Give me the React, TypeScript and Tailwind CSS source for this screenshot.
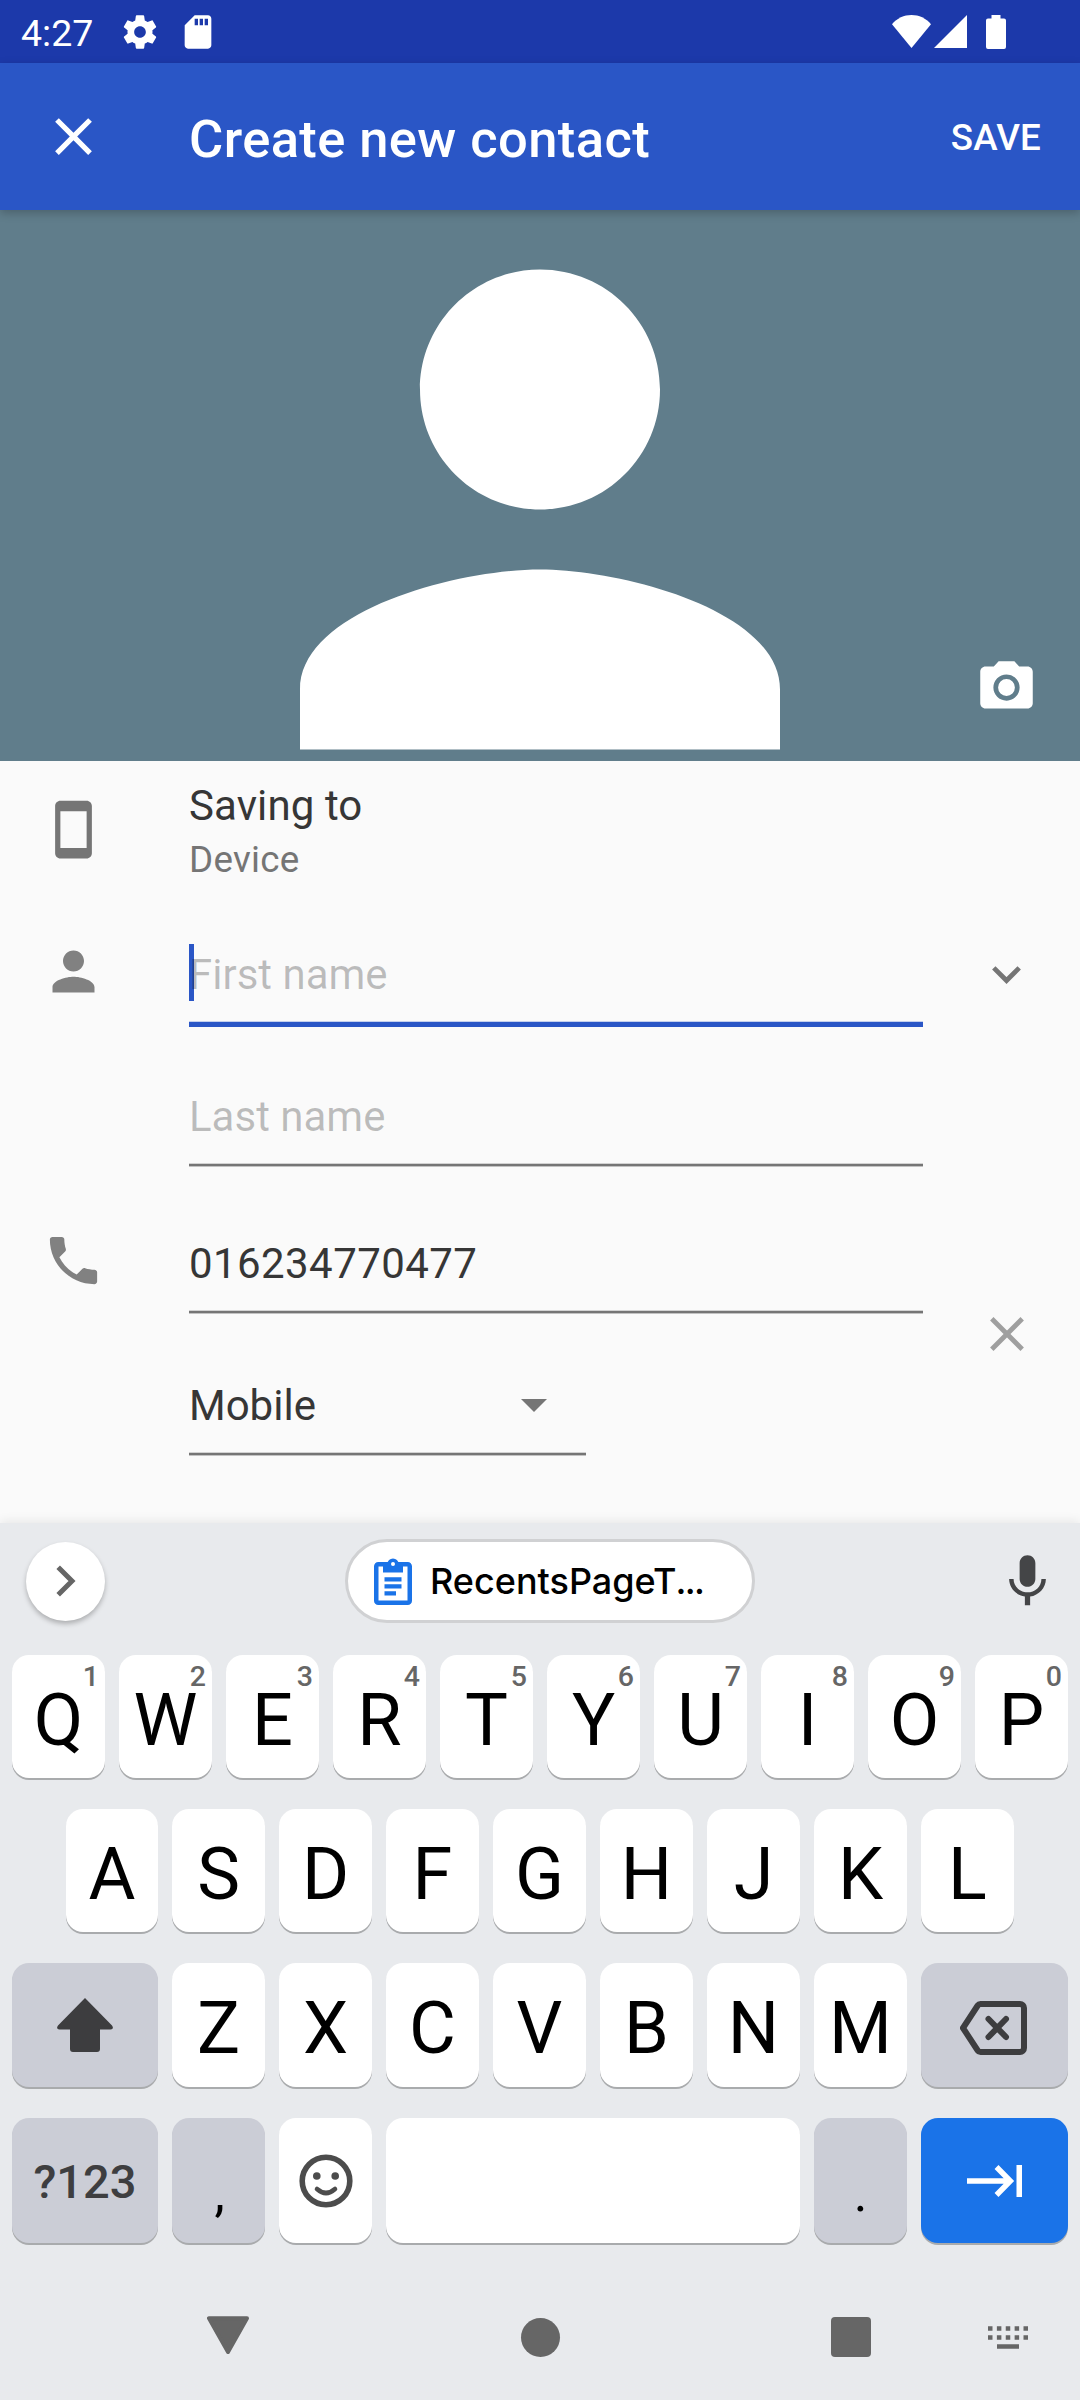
import type { ReactNode } from 'react';

function Icon({ d, className }: { d: string; className: string }) {
  return (
    <svg viewBox="0 0 24 24" className={className} fill="currentColor" aria-hidden="true">
      <path d={d} />
    </svg>
  );
}

const paths = {
  settings:
    'M19.43 12.98c.04-.32.07-.64.07-.98s-.03-.66-.07-.98l2.11-1.65c.19-.15.24-.42.12-.64l-2-3.46c-.12-.22-.39-.3-.61-.22l-2.49 1c-.52-.4-1.08-.73-1.69-.98l-.38-2.65C14.46 2.18 14.25 2 14 2h-4c-.25 0-.46.18-.49.42l-.38 2.65c-.61.25-1.17.59-1.69.98l-2.49-1c-.23-.09-.49 0-.61.22l-2 3.46c-.13.22-.07.49.12.64l2.11 1.65c-.04.32-.07.65-.07.98s.03.66.07.98l-2.11 1.65c-.19.15-.24.42-.12.64l2 3.46c.12.22.39.3.61.22l2.49-1c.52.4 1.08.73 1.69.98l.38 2.65c.03.24.24.42.49.42h4c.25 0 .46-.18.49-.42l.38-2.65c.61-.25 1.17-.59 1.69-.98l2.49 1c.23.09.49 0 .61-.22l2-3.46c.12-.22.07-.49-.12-.64l-2.11-1.65zM12 15.5c-1.93 0-3.5-1.57-3.5-3.5s1.57-3.5 3.5-3.5 3.5 1.57 3.5 3.5-1.57 3.5-3.5 3.5z',
  sdCard:
    'M18 2h-8L4.02 8 4 20c0 1.1.9 2 2 2h12c1.1 0 2-.9 2-2V4c0-1.1-.9-2-2-2zm-6 6h-2V4h2v4zm3 0h-2V4h2v4zm3 0h-2V4h2v4z',
  close:
    'M19 6.41L17.59 5 12 10.59 6.41 5 5 6.41 10.59 12 5 17.59 6.41 19 12 13.41 17.59 19 19 17.59 13.41 12z',
  camera:
    'M12 8.8a3.2 3.2 0 1 0 0 6.4 3.2 3.2 0 0 0 0-6.4zM9 2L7.17 4H4c-1.1 0-2 .9-2 2v12c0 1.1.9 2 2 2h16c1.1 0 2-.9 2-2V6c0-1.1-.9-2-2-2h-3.17L15 2H9zm3 15c-2.76 0-5-2.24-5-5s2.24-5 5-5 5 2.24 5 5-2.24 5-5 5z',
  smartphone:
    'M17 1.01L7 1c-1.1 0-2 .9-2 2v18c0 1.1.9 2 2 2h10c1.1 0 2-.9 2-2V3c0-1.1-.9-1.99-2-1.99zM17 19H7V5h10v14z',
  person:
    'M12 12c2.21 0 4-1.79 4-4s-1.79-4-4-4-4 1.79-4 4 1.79 4 4 4zm0 2c-2.67 0-8 1.34-8 4v2h16v-2c0-2.66-5.33-4-8-4z',
  phone:
    'M6.62 10.79c1.44 2.83 3.76 5.14 6.59 6.59l2.2-2.2c.27-.27.67-.36 1.02-.24 1.12.37 2.33.57 3.57.57.55 0 1 .45 1 1V20c0 .55-.45 1-1 1-9.39 0-17-7.61-17-17 0-.55.45-1 1-1h3.5c.55 0 1 .45 1 1 0 1.25.2 2.45.57 3.57.11.35.03.74-.25 1.02l-2.2 2.2z',
  mic: 'M12 14c1.66 0 2.99-1.34 2.99-3L15 5c0-1.66-1.34-3-3-3S9 3.34 9 5v6c0 1.66 1.34 3 3 3zm5.3-3c0 3-2.54 5.1-5.3 5.1S6.7 14 6.7 11H5c0 3.41 2.72 6.23 6 6.72V21h2v-3.28c3.28-.48 6-3.3 6-6.72h-1.7z',
};

function StatusBar() {
  return (
    <div className="flex h-[63px] items-center bg-[#1c39aa] pl-[21px] text-white">
      <span className="w-[99px] pt-[3px] text-[37.5px] leading-[44px]">4:27</span>
      <Icon d={paths.settings} className="size-[40px]" />
      <Icon d={paths.sdCard} className="ml-[18px] size-[40px]" />
      <svg viewBox="0 0 39 33" className="ml-[674px] h-[33px] w-[39px]" fill="currentColor">
        <path d="M0 9.2C5 3.2 12 0 19.5 0S34 3.2 39 9.2L19.5 33z" />
      </svg>
      <svg viewBox="0 0 33 33" className="ml-[3px] h-[33px] w-[33px]" fill="currentColor">
        <path d="M33 0V33H0z" />
      </svg>
      <svg viewBox="0 0 20 34" className="ml-[19px] h-[34px] w-[20px]" fill="currentColor">
        <path d="M5.5 0h9v3.400h3.500a2 2 0 0 1 2 2V32a2 2 0 0 1-2 2H2a2 2 0 0 1-2-2V5.400a2 2 0 0 1 2-2h3.500z" />
      </svg>
    </div>
  );
}

function AppBar() {
  return (
    <header className="relative z-10 flex h-[147px] items-center bg-[#2a56c6] pr-[39px] pl-[42px] text-white shadow-[0_3px_9px_rgba(0,0,0,0.22)]">
      <Icon d={paths.close} className="size-[63px]" />
      <h1 className="ml-[84px] flex-1 pt-[5px] text-[52.5px] leading-[62px] font-medium tracking-[0.4px]">Create new contact</h1>
      <button className="pt-[2px] text-[36.75px] leading-[44px] font-medium tracking-[0.15px]">SAVE</button>
    </header>
  );
}

function Photo() {
  return (
    <div className="relative h-[551px] bg-[#607d8b]">
      <svg viewBox="0 0 1080 551" className="h-[551px] w-[1080px]" fill="white">
        <path transform="translate(180 -60.5) scale(30)" d={paths.person} />
      </svg>
      <Icon d={paths.camera} className="absolute right-[42px] bottom-[42px] size-[63px] text-white" />
    </div>
  );
}

function Field({ children, className = '', focused = false }: { children: ReactNode; className?: string; focused?: boolean }) {
  return (
    <div className={className}>
      <div className="relative mb-[18px] flex h-[57px] items-center text-[42px] leading-[57px]">
        {focused && <span className="absolute top-[-2px] left-0 h-[57px] w-[5px] bg-[#2a56c6]" />}
        {children}
      </div>
      {focused ? (
        <div className="h-[6px] border-t border-[#c4d0ee] bg-[#2a56c6]" />
      ) : (
        <div className="h-[4px] border-t border-b border-t-[#d2d2d2] border-b-[#c2c2c2] bg-[#757575]" />
      )}
    </div>
  );
}

function Form() {
  return (
    <main className="h-[762px] bg-[#fafafa] text-[#363636]">
      <div className="flex h-[137px] items-center">
        <div className="w-[189px] pl-[42px]">
          <Icon d={paths.smartphone} className="size-[63px] text-[#757575]" />
        </div>
        <div className="pt-[3px]">
          <div className="text-[42px] leading-[50px] tracking-[0.1px]">Saving to</div>
          <div className="mt-[7px] text-[36.75px] leading-[44px] tracking-[0.3px] text-[#757575]">Device</div>
        </div>
      </div>
      <div className="flex">
        <div className="w-[189px] pt-[42px] pl-[42px]">
          <Icon d={paths.person} className="size-[63px] text-[#818181]" />
        </div>
        <div className="w-[734px]">
          <Field className="pt-[48px]" focused>
            <span className="relative text-[#000000]/25">First name</span>
          </Field>
          <Field className="pt-[61px]">
            <span className="text-[#000000]/25">Last name</span>
          </Field>
        </div>
        <div className="pt-[68px] pl-[69px]">
          <svg viewBox="0 0 29 18" className="h-[18px] w-[29px]" fill="none" stroke="#757575" strokeWidth="4.800">
            <path d="M1.800 1.900L14.500 14.500L27.200 1.900" />
          </svg>
        </div>
      </div>
      <div className="flex">
        <div className="w-[189px] pt-[62px] pl-[42px]">
          <Icon d={paths.phone} className="size-[63px] text-[#818181]" />
        </div>
        <div className="w-[734px]">
          <Field className="pt-[68px]">
            <span className="tracking-[0.42px]">016234770477</span>
          </Field>
          <Field className="w-[397px] pt-[63px]">
            <span className="flex-1">Mobile</span>
            <svg viewBox="0 0 26 13" className="mr-[39px] h-[13px] w-[26px]" fill="#757575">
              <path d="M0 0h26L13 13z" />
            </svg>
          </Field>
        </div>
        <div className="pt-[150px] pl-[67px]">
          <svg viewBox="0 0 34 34" className="h-[34px] w-[34px]" fill="none" stroke="#9f9f9f" strokeWidth="4.800">
            <path d="M1.800 1.800L32.200 32.200M32.200 1.800L1.800 32.200" />
          </svg>
        </div>
      </div>
    </main>
  );
}

function SuggestionBar() {
  return (
    <div className="mb-[16px] flex h-[116px] items-center pl-[26px]">
      <button className="flex size-[79px] items-center justify-center rounded-full bg-white shadow-[0_3px_5px_rgba(0,0,0,0.25)]">
        <svg viewBox="0 0 20 32" className="h-[32px] w-[20px]" fill="none" stroke="#666" strokeWidth="5">
          <path d="M2.200 2.200L16 16L2.200 29.800" />
        </svg>
      </button>
      <div className="ml-[240px] flex h-[84px] w-[410px] items-center rounded-full border-[3px] border-[#d0d1d3] bg-white pl-[26px]">
        <svg viewBox="0 0 38 47" className="h-[47px] w-[38px]" fill="none" stroke="#1a73e8">
          <rect x="2.250" y="6.250" width="33.500" height="38.500" rx="2" strokeWidth="4.500" />
          <path d="M9 6h20v8.500H9z" fill="#1a73e8" stroke="none" />
          <circle cx="19" cy="6" r="3.800" fill="white" strokeWidth="3.600" />
          <path d="M10.500 21.300h17M10.500 28.300h17M10.500 35.300h11.500" strokeWidth="4.200" />
        </svg>
        <span className="ml-[18px] font-['Inter'] text-[36px] leading-[44px] font-medium text-black">
          RecentsPageT<span className="-ml-px tracking-[-1.6px]">...</span>
        </span>
      </div>
      <Icon d={paths.mic} className="ml-[241px] size-[63px] text-[#444547]" />
    </div>
  );
}

type Tone = 'light' | 'grey' | 'blue';

const tones: Record<Tone, string> = {
  light: 'bg-white',
  grey: 'bg-[#cbcdd6]',
  blue: 'bg-[#1a73e8]',
};

function Key({ children, hint, tone = 'light', width = 'w-[93px]' }: { children?: ReactNode; hint?: string; tone?: Tone; width?: string }) {
  return (
    <div
      className={`relative flex h-full shrink-0 items-center justify-center rounded-[17px] text-[72px] leading-[52px] text-black shadow-[0_2px_0_#a9abad] ${tones[tone]} ${width}`}
    >
      {children}
      {hint && (
        <span className="absolute top-[8px] right-[6px] text-[28.500px] leading-[28px] font-medium text-[#666]">{hint}</span>
      )}
    </div>
  );
}

function Letters({ letters, hints }: { letters: string; hints?: string }) {
  return (
    <>
      {letters.split('').map((letter, i) => (
        <Key key={letter} hint={hints?.[i]} width={letter === 'A' ? 'w-[92px]' : 'w-[93px]'}>
          <span className="mt-[8px]">{letter}</span>
        </Key>
      ))}
    </>
  );
}

function Keyboard() {
  return (
    <section className="relative h-[877px] bg-[#e8eaed] shadow-[0_-2px_10px_rgba(0,0,0,0.08)]">
      <SuggestionBar />
      <div className="flex flex-col gap-[31px]">
        <div className="flex h-[123px] justify-center gap-[14px]">
          <Letters letters="QWERTYUIOP" hints="1234567890" />
        </div>
        <div className="flex h-[123px] justify-center gap-[14px]">
          <Letters letters="ASDFGHJKL" />
        </div>
        <div className="flex h-[124px] gap-[14px] pl-[12px]">
          <Key tone="grey" width="w-[146px]">
            <svg viewBox="0 0 56 54" className="h-[54px] w-[56px]" fill="#3d3d3f">
              <path d="M28 0L55 27.500q1.500 2 .5 3.200q-.7.800-2 .8H43V51a3 3 0 0 1-3 3H16a3 3 0 0 1-3-3V31.500H2.500q-1.300 0-2-.8q-1-1.200.5-3.200z" />
            </svg>
          </Key>
          <Letters letters="ZXCVBNM" />
          <Key tone="grey" width="w-[147px]">
            <svg viewBox="0 0 67 54" className="mt-[5px] mr-[2px] h-[54px] w-[67px]" fill="none" stroke="#3d3d3f" strokeWidth="6" strokeLinejoin="round" strokeLinecap="round">
              <path d="M20.500 3H60a4 4 0 0 1 4 4V47a4 4 0 0 1-4 4H20.500q-1.800 0-2.800-1.500L3 27L17.700 4.500Q18.700 3 20.500 3z" strokeLinejoin="miter" />
              <path d="M28.500 18L46 36M46 18L28.500 36" />
            </svg>
          </Key>
        </div>
        <div className="flex h-[125px] gap-[14px] pl-[12px]">
          <Key tone="grey" width="w-[146px]">
            <span className="pt-[3px] text-[47px] leading-[56px] font-medium text-[#3e3e40]">?123</span>
          </Key>
          <Key tone="grey">
            <span className="pt-[26px] pl-[2px] text-[52px] leading-[60px]">,</span>
          </Key>
          <Key>
            <svg viewBox="0 0 54 54" className="h-[54px] w-[54px]" fill="none" stroke="#4c4c4c" strokeLinecap="round">
              <circle cx="27" cy="27" r="23.800" strokeWidth="5.600" />
              <circle cx="17.800" cy="22" r="3.800" fill="#4c4c4c" stroke="none" />
              <circle cx="36.200" cy="22" r="3.800" fill="#4c4c4c" stroke="none" />
              <path d="M18 35Q27 43 36 35" strokeWidth="4.600" />
            </svg>
          </Key>
          <Key width="w-[414px]" />
          <Key tone="grey">
            <span className="pt-[26px] text-[52px] leading-[60px]">.</span>
          </Key>
          <Key tone="blue" width="w-[147px]">
            <svg viewBox="0 0 55 32" className="h-[32px] w-[55px]" fill="none" stroke="white" strokeWidth="5.500">
              <path d="M0 16H43M29.500 2L43.300 16L29.500 30M52.250 0V32" />
            </svg>
          </Key>
        </div>
      </div>
      <nav className="mt-[31px] flex h-[126px] items-center pl-[207px]">
        <svg viewBox="0 0 42 38" className="mb-[5px] h-[38px] w-[42px]" fill="#666" stroke="#666" strokeWidth="4" strokeLinejoin="round">
          <path d="M2 2.300H40L21 36z" />
        </svg>
        <div className="ml-[271.500px] size-[39px] rounded-full bg-[#666]" />
        <div className="ml-[271.500px] size-[40px] rounded-[4px] bg-[#666]" />
        <svg viewBox="0 0 40 23" className="ml-[117px] h-[23px] w-[40px]" stroke="#666" strokeWidth="4.500">
          <path d="M0 2.500H40M0 11.500H40" strokeDasharray="4.500 4.375" />
          <path d="M9 20.500H31" />
        </svg>
      </nav>
    </section>
  );
}

export default function App() {
  return (
    <div className="h-[2400px] w-[1080px] overflow-hidden font-['Roboto',sans-serif]">
      <StatusBar />
      <AppBar />
      <Photo />
      <Form />
      <Keyboard />
    </div>
  );
}
